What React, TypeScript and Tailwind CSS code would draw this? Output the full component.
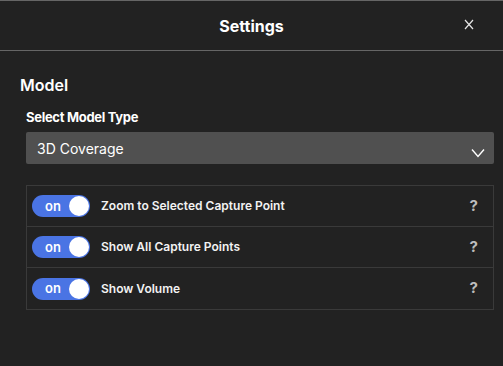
import React from "react";

function Toggle() {
  return (
    <div className="flex items-center justify-between w-[58px] h-[22px] rounded-full bg-[#4a74e4] pl-[13px] pr-[1px]">
      <span className="text-[13px] font-semibold text-white leading-none">on</span>
      <span className="w-[20px] h-[20px] rounded-full bg-white" />
    </div>
  );
}

function Row({ label, last }: { label: string; last?: boolean }) {
  return (
    <div className={`flex items-center h-[41px] pl-[5px] pr-[15px] ${last ? "" : "border-b border-[#3a3a3a]"}`}>
      <Toggle />
      <span className="ml-[11px] text-[12px] font-semibold text-[#f2f2f2]">{label}</span>
      <span className="ml-auto text-[15px] font-bold text-[#bdbdbd]">?</span>
    </div>
  );
}

export default function App() {
  return (
    <div className="w-[503px] h-[366px] bg-[#222222] flex flex-col" style={{ fontFamily: "Inter, 'Liberation Sans', sans-serif" }}>
      <div className="relative flex items-center justify-center h-[51px] border-t border-b border-[#666666]">
        <span className="text-[16px] font-bold text-white">Settings</span>
        <svg className="absolute left-[464px] top-[18px]" width="10" height="11" viewBox="0 0 10 11">
          <path d="M1 1 L9 10 M9 1 L1 10" stroke="#e6e6e6" strokeWidth="1.2" fill="none" />
        </svg>
      </div>
      <div className="flex flex-col pl-[20px] pr-[9px]">
        <div className="mt-[23px] text-[16px] font-semibold text-white leading-[22px]">Model</div>
        <div className="mt-[13px] ml-[6px] text-[13px] font-bold text-white tracking-[-0.3px] leading-[16px]">Select Model Type</div>
        <div className="mt-[7px] ml-[6px] h-[32px] bg-[#505050] rounded-[2px] flex items-center pl-[11px] pr-[9px]">
          <span className="text-[14px] text-white">3D Coverage</span>
          <svg className="ml-auto mt-[10px]" width="14" height="10" viewBox="0 0 14 10">
            <path d="M1 1.5 L7 8.5 L13 1.5" stroke="#ffffff" strokeWidth="1.4" fill="none" />
          </svg>
        </div>
        <div className="mt-[21px] ml-[6px] border border-[#3a3a3a]">
          <Row label="Zoom to Selected Capture Point" />
          <Row label="Show All Capture Points" />
          <Row label="Show Volume" last />
        </div>
      </div>
    </div>
  );
}
